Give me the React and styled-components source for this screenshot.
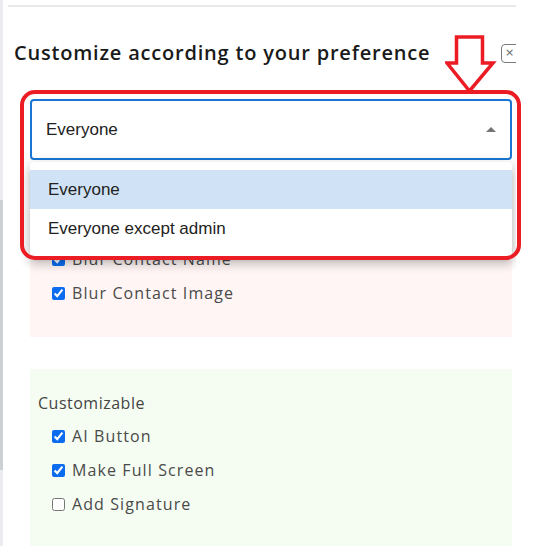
import React from "react";
import styled, { createGlobalStyle } from "styled-components";

const Global = createGlobalStyle`
  html, body { margin: 0; padding: 0; background: #fff; }
  body { font-family: "Open Sans", sans-serif; overflow: hidden; }
`;

const Page = styled.div`
  position: relative;
  display: flex;
  width: 538px;
  height: 546px;
  overflow: hidden;
`;

const Rail = styled.div`
  width: 3px;
  flex: none;
  background: #ececf0;
  display: flex;
  flex-direction: column;
`;

const Thumb = styled.div`
  margin-top: 200px;
  height: 270px;
  background: #cdd0d3;
`;

const Panel = styled.div`
  margin: 5px 0 0 5px;
  width: 508px;
  flex: none;
  border-top: 2px solid #e8e8e8;
  overflow: hidden;
  display: flex;
  flex-direction: column;
`;

const Header = styled.div`
  display: flex;
  align-items: center;
  padding: 32px 0 0 6px;
  height: 28px;
`;

const Title = styled.h2`
  margin: 0;
  font-family: "Open Sans", sans-serif;
  font-weight: 600;
  font-size: 20px;
  line-height: 28px;
  letter-spacing: 0.8px;
  color: #1a1a1a;
  white-space: nowrap;
`;

const CloseBtn = styled.button`
  margin-left: auto;
  margin-right: -7px;
  flex: none;
  width: 22px;
  height: 19px;
  padding: 0 0 0 3px;
  border: 1.5px solid #7b7b7b;
  border-radius: 4px;
  background: #fff;
  color: #666;
  font-size: 11px;
  line-height: 14px;
  font-family: "DejaVu Sans", sans-serif;
  text-align: left;
`;

const Body = styled.div`
  display: flex;
  flex-direction: column;
  gap: 32px;
  margin: 32px 4px 0 22px;
`;

const SelectWrap = styled.div`
  position: relative;
  z-index: 2;
`;

const SelectBox = styled.div`
  height: 61px;
  box-sizing: border-box;
  border: 2px solid #1976d2;
  border-radius: 4px;
  display: flex;
  align-items: center;
  padding: 0 14px;
  font-family: "Liberation Sans", Arial, sans-serif;
  font-size: 17px;
  color: #222;
  background: #fff;
`;

const Caret = styled.span`
  margin-left: auto;
  width: 0;
  height: 0;
  border-left: 5px solid transparent;
  border-right: 5px solid transparent;
  border-bottom: 5px solid #757575;
`;

const Menu = styled.ul`
  position: absolute;
  top: calc(100% + 2px);
  left: 0;
  right: 0;
  margin: 0;
  padding: 8px 0;
  list-style: none;
  background: #fff;
  border-radius: 4px;
  box-shadow: 0px 5px 5px -3px rgba(0, 0, 0, 0.2),
    0px 8px 10px 1px rgba(0, 0, 0, 0.14), 0px 3px 14px 2px rgba(0, 0, 0, 0.12);
`;

const MenuItem = styled.li`
  height: 39px;
  display: flex;
  align-items: center;
  padding-left: 18px;
  font-family: "Liberation Sans", Arial, sans-serif;
  font-size: 17px;
  color: #222;
  background: ${(p) => (p.$selected ? "#d0e2f5" : "transparent")};
`;

const Section = styled.section`
  background: ${(p) => p.$bg};
  padding: 23px 8px 32px;
`;

const SectionTitle = styled.div`
  font-family: "Open Sans", sans-serif;
  font-size: 16px;
  line-height: 22px;
  letter-spacing: 0.5px;
  color: #444;
`;

const List = styled.div`
  margin-top: 10px;
  padding-left: 14px;
  display: flex;
  flex-direction: column;
  gap: 10px;
`;

const Row = styled.label`
  display: flex;
  align-items: center;
  gap: 7px;
  height: 24px;
  font-family: "Open Sans", sans-serif;
  font-size: 16px;
  letter-spacing: 1.1px;
  color: #4a4a4a;
`;

const Check = styled.input`
  margin: 0;
  width: 13px;
  height: 13px;
  accent-color: #0b6cf0;
`;

const RedBox = styled.div`
  position: absolute;
  left: 20px;
  top: 90px;
  width: 501px;
  height: 170px;
  box-sizing: border-box;
  border: 4px solid #ec1c24;
  border-radius: 15px;
  pointer-events: none;
  z-index: 5;
`;

const ArrowSvg = styled.svg`
  position: absolute;
  left: 445px;
  top: 35px;
  z-index: 6;
`;

const Item = ({ label, checked }) => (
  <Row>
    <Check type="checkbox" defaultChecked={checked} />
    {label}
  </Row>
);

export default function App() {
  return (
    <Page>
      <Global />
      <Rail>
        <Thumb />
      </Rail>
      <Panel>
        <Header>
          <Title>Customize according to your preference</Title>
          <CloseBtn aria-label="close">×</CloseBtn>
        </Header>
        <Body>
          <SelectWrap>
            <SelectBox>
              Everyone
              <Caret />
            </SelectBox>
            <Menu>
              <MenuItem $selected>Everyone</MenuItem>
              <MenuItem>Everyone except admin</MenuItem>
            </Menu>
          </SelectWrap>
          <Section $bg="#fef5f4">
            <SectionTitle>Blur</SectionTitle>
            <List>
              <Item label="Blur Contact Name" checked />
              <Item label="Blur Contact Image" checked />
            </List>
          </Section>
          <Section $bg="#f5fdf2">
            <SectionTitle>Customizable</SectionTitle>
            <List>
              <Item label="AI Button" checked />
              <Item label="Make Full Screen" checked />
              <Item label="Add Signature" />
            </List>
          </Section>
        </Body>
      </Panel>
      <RedBox />
      <ArrowSvg width="52" height="60" viewBox="0 0 52 60">
        <polygon
          points="11.5,2 37.5,2 37.5,28 48,28 24.5,56 2,28 11.5,28"
          fill="#fff"
          stroke="#ec1c24"
          strokeWidth="3.5"
          strokeLinejoin="miter"
        />
      </ArrowSvg>
    </Page>
  );
}
